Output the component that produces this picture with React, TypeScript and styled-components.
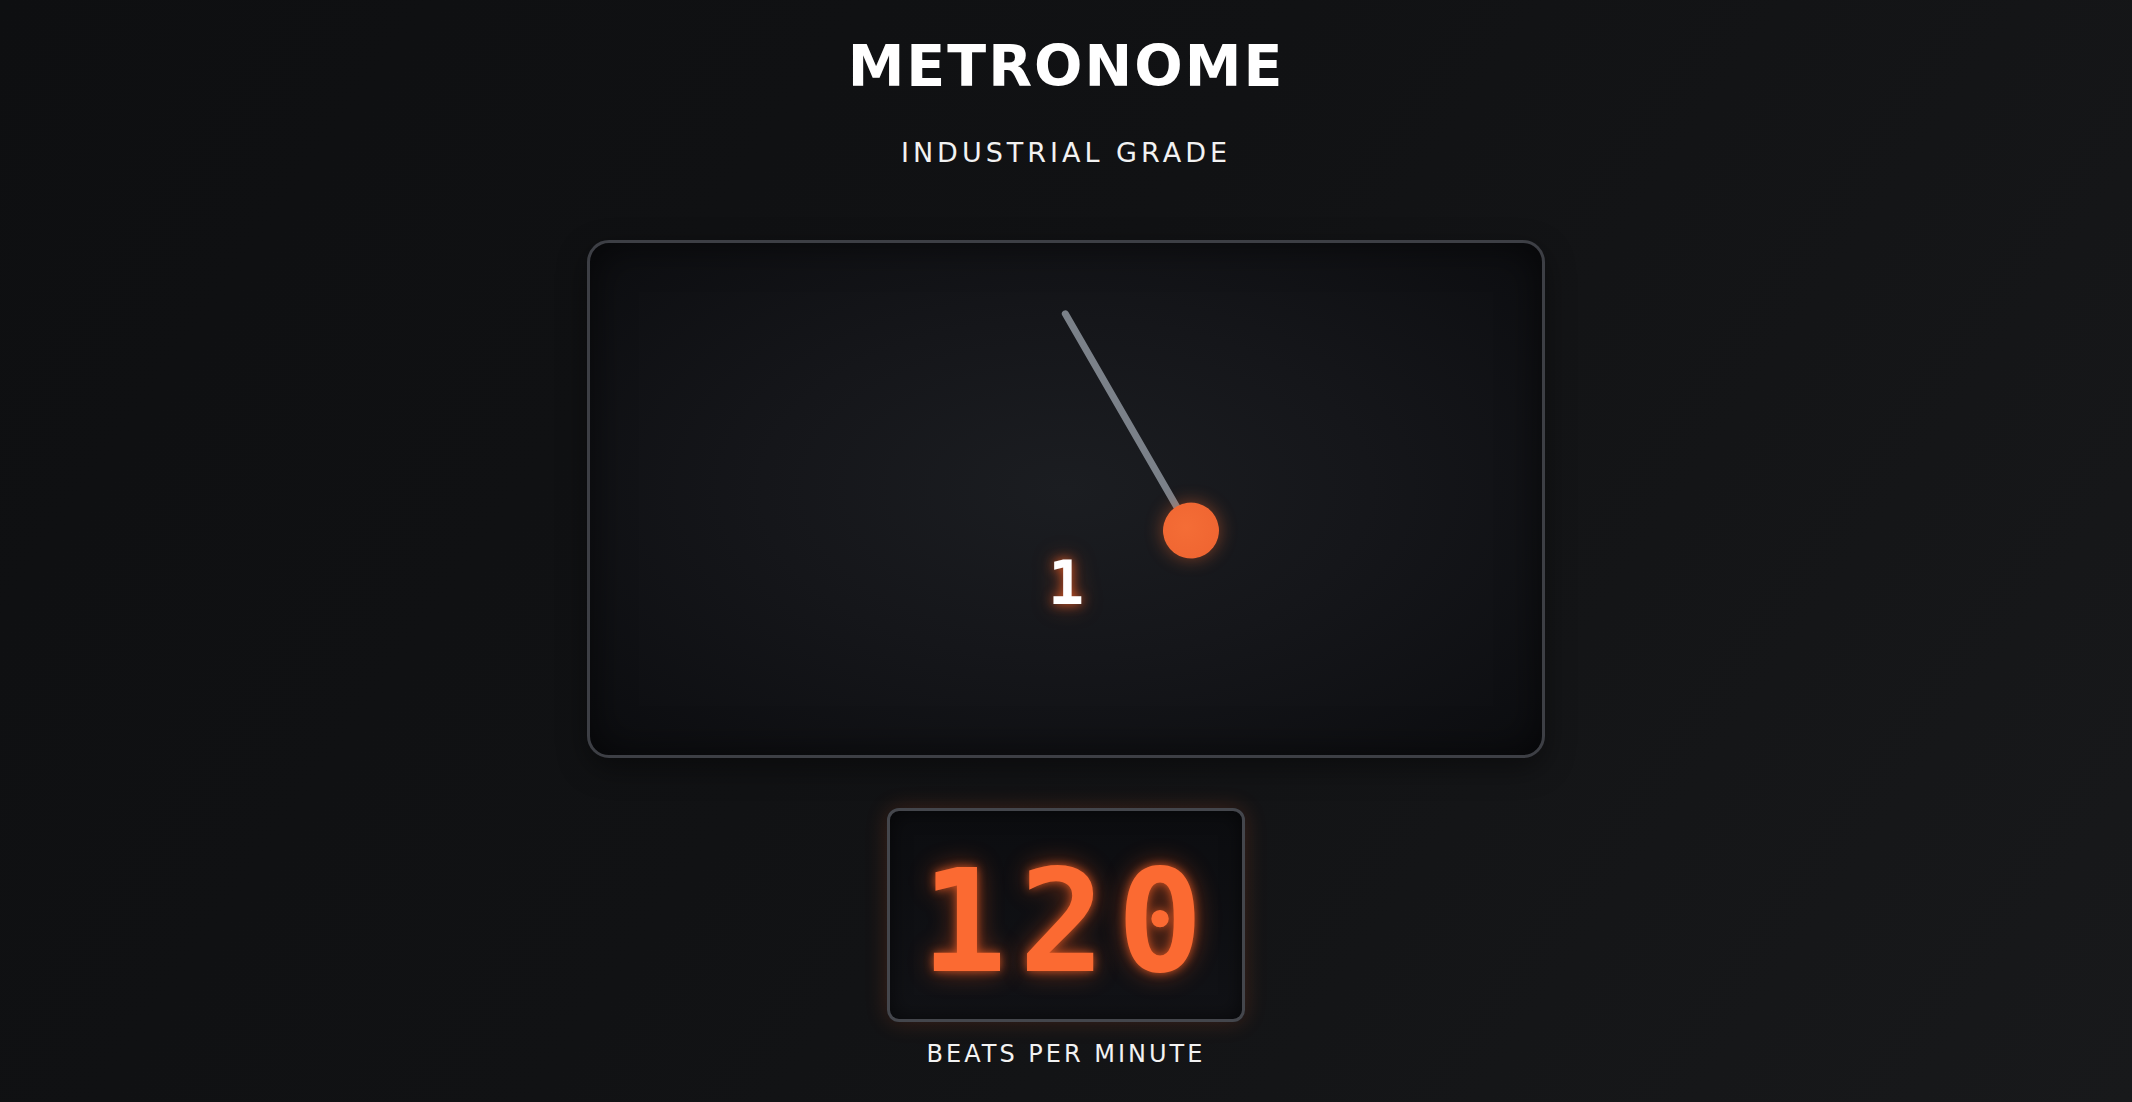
import React from "react";
import styled, { createGlobalStyle } from "styled-components";

const Global = createGlobalStyle`
  html, body { margin: 0; padding: 0; }
  body {
    background: #0f1012;
    font-family: "DejaVu Sans", "Liberation Sans", sans-serif;
  }
`;

const Page = styled.main`
  min-height: 1102px;
  box-sizing: border-box;
  display: flex;
  flex-direction: column;
  align-items: center;
  padding-top: 31px;
  background:
    linear-gradient(125deg, #0e0f11 0%, #111214 45%, #141517 70%, #18191b 100%);
  overflow: hidden;
`;

const Title = styled.h1`
  margin: 0;
  font-family: "DejaVu Sans", sans-serif;
  font-weight: 700;
  font-size: 57px;
  line-height: 70px;
  letter-spacing: 2px;
  color: #ffffff;
`;

const Subtitle = styled.h2`
  margin: 35px 0 0;
  font-family: "DejaVu Sans", sans-serif;
  font-weight: 400;
  font-size: 27px;
  line-height: 34px;
  letter-spacing: 4px;
  color: #f2f2f2;
`;

const Stage = styled.section`
  position: relative;
  margin-top: 70px;
  width: 958px;
  height: 518px;
  box-sizing: border-box;
  border: 3px solid #3d3f45;
  border-radius: 22px;
  background: radial-gradient(ellipse at 50% 48%, #1b1d21 0%, #15161a 45%, #0c0d10 100%);
  box-shadow: inset 0 0 40px rgba(0, 0, 0, 0.6), 0 10px 30px rgba(0, 0, 0, 0.4);
`;

const Arm = styled.div<{ $angle: number }>`
  position: absolute;
  left: calc(50% - 4px);
  top: 67px;
  width: 8px;
  height: 260px;
  transform-origin: 4px 4px;
  transform: rotate(${(p) => p.$angle}deg);
`;

const Rod = styled.div`
  position: absolute;
  left: 0;
  top: 0;
  width: 7px;
  height: 234px;
  border-radius: 4px;
  background: #7b8189;
`;

const Bob = styled.div`
  position: absolute;
  left: -24px;
  top: 226px;
  width: 56px;
  height: 56px;
  border-radius: 50%;
  background: radial-gradient(circle at 45% 40%, #f46d36, #ee6330);
  box-shadow: 0 0 18px rgba(255, 110, 50, 0.45);
`;

const BeatNumber = styled.div`
  position: absolute;
  left: 0;
  right: 0;
  top: 304px;
  text-align: center;
  font-family: "DejaVu Sans Mono", monospace;
  font-weight: 700;
  font-size: 60px;
  line-height: 72px;
  color: #ffffff;
  text-shadow: 0 0 12px rgba(255, 100, 40, 0.85), 0 0 24px rgba(255, 100, 40, 0.4);
`;

const Display = styled.div`
  margin-top: 50px;
  width: 358px;
  height: 214px;
  box-sizing: border-box;
  border: 3px solid #44464c;
  border-radius: 12px;
  background: linear-gradient(180deg, #0c0d10 0%, #111216 100%);
  box-shadow: 0 0 22px rgba(255, 100, 40, 0.18), inset 0 0 20px rgba(0, 0, 0, 0.6);
  display: flex;
  align-items: center;
  justify-content: center;
`;

const Bpm = styled.div`
  font-family: "DejaVu Sans Mono", monospace;
  font-weight: 700;
  font-size: 143px;
  line-height: 1;
  letter-spacing: 12px;
  padding-left: 4px;
  padding-top: 12px;
  color: #fb6a32;
  text-shadow: 0 0 10px rgba(255, 100, 40, 0.75), 0 0 26px rgba(255, 90, 30, 0.45);
`;

const Caption = styled.div`
  margin-top: 18px;
  font-family: "DejaVu Sans", sans-serif;
  font-weight: 400;
  font-size: 24px;
  letter-spacing: 3px;
  color: #f2f2f2;
`;

export default function App() {
  return (
    <>
      <Global />
      <Page>
        <Title>METRONOME</Title>
        <Subtitle>INDUSTRIAL GRADE</Subtitle>
        <Stage>
          <Arm $angle={-30}>
            <Rod />
            <Bob />
          </Arm>
          <BeatNumber>1</BeatNumber>
        </Stage>
        <Display>
          <Bpm>120</Bpm>
        </Display>
        <Caption>BEATS PER MINUTE</Caption>
      </Page>
    </>
  );
}
